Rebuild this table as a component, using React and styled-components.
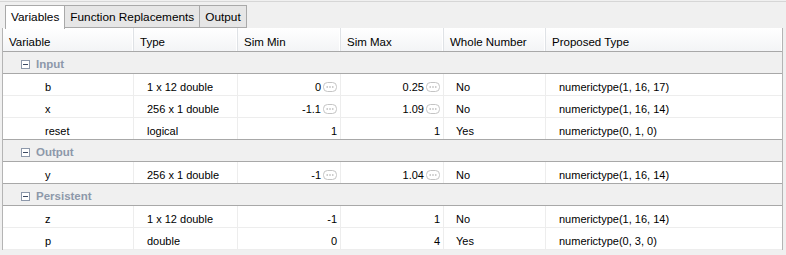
import React from 'react'
import styled, { createGlobalStyle } from 'styled-components'

const GlobalStyle = createGlobalStyle`
  html, body {
    margin: 0;
    padding: 0;
    background: #f0f0f0;
  }
  body {
    font-family: "Liberation Sans", Arial, sans-serif;
    font-size: 11px;
    color: #000;
  }
`

const Page = styled.div`
  width: 786px;
  height: 255px;
  box-sizing: border-box;
  padding-top: 1px;
  background: #f0f0f0;
  overflow: hidden;
`

const TopLine = styled.div`
  border-top: 1px solid #d6d6d6;
  height: 3px;
`

const TabBar = styled.div`
  display: flex;
  padding-left: 5px;
  height: 23px;
  position: relative;
  z-index: 1;
`

const Tab = styled.div`
  box-sizing: border-box;
  height: ${p => (p.$active ? '24px' : '23px')};
  padding: 4px 5px 0 5px;
  font-size: 11.8px;
  border: 1px solid #a9a9a9;
  border-bottom: ${p => (p.$active ? 'none' : '1px solid #a9a9a9')};
  border-left-width: ${p => (p.$first ? '1px' : '0')};
  background: ${p => (p.$active ? '#fff' : '#e6e6e6')};
  white-space: nowrap;
`

const Panel = styled.div`
  margin: 0 3px 0 2px;
  border-left: 1px solid #b4b4b4;
  border-right: 1px solid #b4b4b4;
  background: #fff;
`

const cols = '131px 104px 103px 103px 102px 1fr'

const HeaderRow = styled.div`
  display: grid;
  grid-template-columns: ${cols};
  height: 24px;
  box-sizing: border-box;
  border-bottom: 1px solid #d0d0d0;
  background: linear-gradient(#ffffff, #f3f4f6);
`

const HeaderCell = styled.div`
  padding: 8px 0 0 6px;
  font-size: 11.5px;
  border-right: 1px solid #dfe2e6;
  box-shadow: inset -1px 0 0 #fff;
  white-space: nowrap;
  overflow: hidden;
  &:last-child {
    border-right: none;
  }
`

const GroupRow = styled.div`
  display: flex;
  align-items: center;
  gap: 6px;
  height: 22px;
  box-sizing: border-box;
  padding: 3px 0 0 18px;
  background: #f0f0f0;
  border-bottom: 1px solid #a8a8a8;
  box-shadow: 0 -1px 0 #a8a8a8;
  color: #8d98aa;
  font-weight: bold;
  font-size: 11.5px;
`

const DataRow = styled.div`
  display: grid;
  grid-template-columns: ${cols};
  height: 22px;
  box-sizing: border-box;
  border-bottom: 1px solid #ededed;
`

const Cell = styled.div`
  display: flex;
  align-items: center;
  justify-content: ${p => (p.$right ? 'flex-end' : 'flex-start')};
  gap: 2px;
  padding: 4px ${p => (p.$right ? '3px' : '0')} 0 ${p => p.$pad || 0}px;
  border-right: 1px solid #ededed;
  white-space: nowrap;
  &:last-child {
    border-right: none;
  }
`

const Collapse = () => (
  <svg width="9" height="9" viewBox="0 0 9 9">
    <rect x="0.5" y="0.5" width="8" height="8" fill="#fff" stroke="#8d98aa" />
    <line x1="2" y1="4.5" x2="7" y2="4.5" stroke="#3c4a63" />
  </svg>
)

const More = () => (
  <svg width="14" height="10" viewBox="0 0 14 10">
    <rect x="0.5" y="0.5" width="13" height="9" rx="4" fill="#fff" stroke="#c4c4c4" />
    <circle cx="4.2" cy="5" r="0.8" fill="#a8a8a8" />
    <circle cx="7" cy="5" r="0.8" fill="#a8a8a8" />
    <circle cx="9.8" cy="5" r="0.8" fill="#a8a8a8" />
  </svg>
)

const groups = [
  {
    name: 'Input',
    rows: [
      ['b', '1 x 12 double', '0', '0.25', 'No', 'numerictype(1, 16, 17)', true],
      ['x', '256 x 1 double', '-1.1', '1.09', 'No', 'numerictype(1, 16, 14)', true],
      ['reset', 'logical', '1', '1', 'Yes', 'numerictype(0, 1, 0)', false],
    ],
  },
  {
    name: 'Output',
    rows: [['y', '256 x 1 double', '-1', '1.04', 'No', 'numerictype(1, 16, 14)', true]],
  },
  {
    name: 'Persistent',
    rows: [
      ['z', '1 x 12 double', '-1', '1', 'No', 'numerictype(1, 16, 14)', false],
      ['p', 'double', '0', '4', 'Yes', 'numerictype(0, 3, 0)', false],
    ],
  },
]

const header = ['Variable', 'Type', 'Sim Min', 'Sim Max', 'Whole Number', 'Proposed Type']

export default function App() {
  return (
    <Page>
      <GlobalStyle />
      <TopLine />
      <TabBar>
        <Tab $active $first>Variables</Tab>
        <Tab>Function Replacements</Tab>
        <Tab>Output</Tab>
      </TabBar>
      <Panel>
        <HeaderRow>
          {header.map(h => <HeaderCell key={h}>{h}</HeaderCell>)}
        </HeaderRow>
        {groups.map(g => (
          <React.Fragment key={g.name}>
            <GroupRow>
              <Collapse />
              {g.name}
            </GroupRow>
            {g.rows.map(r => (
              <DataRow key={r[0]}>
                <Cell $pad={42}>{r[0]}</Cell>
                <Cell $pad={13}>{r[1]}</Cell>
                <Cell $right>{r[2]}{r[6] && <More />}</Cell>
                <Cell $right>{r[3]}{r[6] && <More />}</Cell>
                <Cell $pad={12}>{r[4]}</Cell>
                <Cell $pad={13}>{r[5]}</Cell>
              </DataRow>
            ))}
          </React.Fragment>
        ))}
      </Panel>
    </Page>
  )
}
